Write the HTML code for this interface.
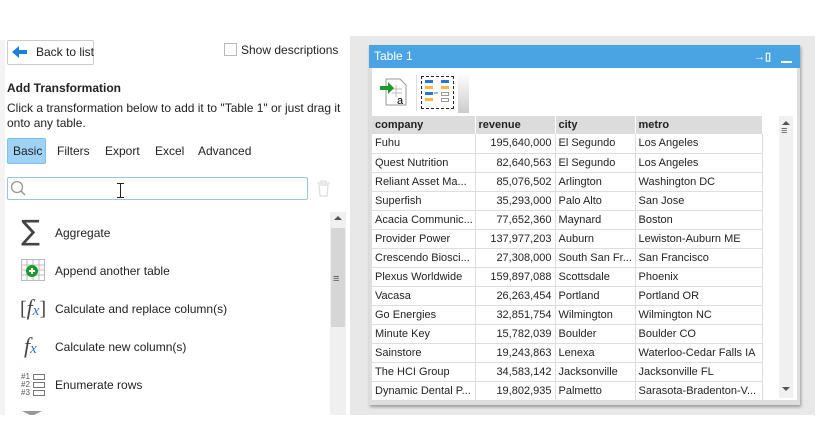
<!DOCTYPE html>
<html><head><meta charset="utf-8"><style>
*{box-sizing:border-box;margin:0;padding:0}
body{width:819px;height:427px;position:relative;background:#fff;font-family:"Liberation Sans",sans-serif;font-size:12px;color:#222;overflow:hidden}
.a{position:absolute;white-space:nowrap}
.btn{left:7px;top:40px;width:87px;height:25px;border:1px solid #ccc;border-radius:2px;background:#fff;font-size:12px;line-height:23px;padding-left:28px}
.tabs span{position:absolute;top:144px;font-size:12px}
td{border-right:1px solid #ddd;border-bottom:1px solid #ddd;height:19px;padding:0 3px;font-size:11px;white-space:nowrap;overflow:hidden}
th{background:#dcdcdc;text-align:left;font-weight:bold;height:18px;padding:0 3px;font-size:11px;border-right:1px solid #fff}
table{border-collapse:collapse;table-layout:fixed}
.n{text-align:right}
.it{position:absolute;left:55px;font-size:12px}
</style></head><body>
<div class="a" style="left:0;top:40px;width:5px;height:375px;background:#f3f3f3"></div>
<div class="a btn"><svg class="a" style="left:4px;top:5px" width="16" height="12"><path d="M0 6 L7 0 V4 H15 V8 H7 V12Z" fill="#1b7fd6"/></svg>Back to list</div>
<div class="a" style="left:224px;top:43px;width:13px;height:13px;border:1px solid #bbb"></div>
<div class="a" style="left:241px;top:43px;font-size:12px">Show descriptions</div>
<div class="a" style="left:7px;top:81px;font-weight:bold;font-size:12px">Add Transformation</div>
<div class="a" style="left:7px;top:101px;font-size:12px;line-height:15px;width:340px;white-space:normal">Click a transformation below to add it to "Table 1" or just drag it onto any table.</div>
<div class="a" style="left:7px;top:138px;width:39px;height:26px;background:#9fd3f5;border:1px solid #7fbfe8;border-radius:2px"></div>
<div class="tabs"><span style="left:13px">Basic</span><span style="left:57px">Filters</span><span style="left:105px">Export</span><span style="left:155px">Excel</span><span style="left:198px">Advanced</span></div>
<div class="a" style="left:7px;top:177px;width:301px;height:23px;border:1px solid #9cc3e0;border-radius:2px"></div>
<svg class="a" style="left:10px;top:180px" width="16" height="17"><circle cx="7" cy="7" r="5.5" stroke="#999" fill="none" stroke-width="1.3"/><path d="M11 11 L15 15" stroke="#999" stroke-width="1.5"/></svg>
<div class="a" style="left:120px;top:183px;width:1px;height:15px;background:#222"></div><div class="a" style="left:117px;top:183px;width:7px;height:1px;background:#222"></div><div class="a" style="left:117px;top:197px;width:7px;height:1px;background:#222"></div>
<svg class="a" style="left:316px;top:180px" width="15" height="17"><path d="M1 3H14M5 3V1H10V3M3 5H12L11 16H4Z" stroke="#ddd" fill="none" stroke-width="1.3"/></svg>
<div class="a" style="left:330px;top:212px;width:16px;height:203px;background:#f0f0f0"></div>
<div class="a" style="left:331px;top:228px;width:14px;height:99px;background:#d6d6d6"></div>
<div class="a" style="left:334px;top:216px;width:0;height:0;border-left:4px solid transparent;border-right:4px solid transparent;border-bottom:4px solid #555"></div>
<div class="a" style="left:333px;top:273px;font-size:11px;color:#555">≡</div>
<div class="a" style="left:21px;top:216px;font-size:28px;line-height:30px;color:#444;font-family:'DejaVu Sans',sans-serif">∑</div>
<div class="it" style="top:226px">Aggregate</div>
<svg class="a" style="left:21px;top:259px" width="24" height="22"><g stroke="#bbb" fill="none"><rect x="0.5" y="0.5" width="23" height="21"/><path d="M0 6H24M0 11H24M0 16H24M6 0V22M12 0V22M18 0V22"/></g><circle cx="11" cy="12" r="6" fill="#1a9a2a"/><path d="M8 12H14M11 9V15" stroke="#fff" stroke-width="2"/></svg>
<div class="it" style="top:264px">Append another table</div>
<div class="a" style="left:20px;top:295px;font-size:20px;color:#444;font-family:'Liberation Serif',serif">[<i style="font-size:22px">f</i><span style="color:#2a73c9;font-size:15px;font-style:italic">x</span>]</div>
<div class="it" style="top:302px">Calculate and replace column(s)</div>
<div class="a" style="left:24px;top:333px;font-size:22px;color:#444;font-family:'Liberation Serif',serif"><i>f</i><span style="color:#2a73c9;font-size:15px;font-style:italic">x</span></div>
<div class="it" style="top:340px">Calculate new column(s)</div>
<div class="a" style="left:21px;top:373px;font-size:8px;line-height:8px;color:#555">#1<br>#2<br>#3</div>
<div class="a" style="left:33px;top:374px;width:12px;height:6px;border:1px solid #777"></div><div class="a" style="left:33px;top:382px;width:12px;height:6px;border:1px solid #777"></div><div class="a" style="left:33px;top:390px;width:12px;height:6px;border:1px solid #777"></div>
<div class="it" style="top:378px">Enumerate rows</div>
<div class="a" style="left:22px;top:411px;width:0;height:0;border-left:10px solid transparent;border-right:10px solid transparent;border-top:5px solid #999"></div>
<div class="a" style="left:0;top:415px;width:819px;height:12px;background:#fff"></div>

<div class="a" style="left:350px;top:36px;width:465px;height:379px;background:#e8e8e8"></div>
<div class="a" style="left:369px;top:45px;width:431px;height:360px;background:#dedede;box-shadow:1px 2px 3px rgba(0,0,0,.35)"></div>
<div class="a" style="left:369px;top:45px;width:431px;height:23px;background:#4aa3e2;color:#fff;font-size:12px;line-height:23px;padding-left:5px">Table 1</div>
<div class="a" style="left:754px;top:50px;color:#fff;font-size:11px;font-weight:bold">→▯</div>
<div class="a" style="left:781px;top:61px;width:11px;height:2px;background:#fff"></div>
<div class="a" style="left:372px;top:68px;width:425px;height:332px;background:#fff"></div>
<svg class="a" style="left:380px;top:77px" width="30" height="30"><path d="M6 2H20L26 8V28H6Z" fill="#fff" stroke="#999"/><path d="M12 12H22M12 16H22M16 8V20" stroke="#bbb"/><path d="M0 9H8V5L14 11L8 17V13H0Z" fill="#1a9a2a"/><text x="17" y="27" font-size="11" font-family="Liberation Sans">a</text></svg>
<div class="a" style="left:416px;top:75px;width:1px;height:36px;background:#ddd"></div>
<div class="a" style="left:421px;top:76px;width:33px;height:33px;border:1px dashed #223"></div>
<svg class="a" style="left:425px;top:80px" width="26" height="26"><g fill="#2a73d9"><rect x="0" y="0" width="8" height="3"/><rect x="0" y="12" width="8" height="3"/><rect x="16" y="0" width="8" height="3"/></g><g fill="#f5b942"><rect x="0" y="6" width="8" height="3"/><rect x="0" y="18" width="8" height="3"/><rect x="16" y="6" width="8" height="3"/></g><g fill="none" stroke="#999"><rect x="16.5" y="12.5" width="7" height="3"/><rect x="16.5" y="18.5" width="7" height="3"/></g><path d="M9 13H13" stroke="#2a73d9"/></svg>
<div class="a" style="left:458px;top:73px;width:11px;height:40px;background:linear-gradient(#fff,#ccc)"></div>
<table class="a" style="left:372px;top:116px;width:390px">
<colgroup><col style="width:103px"><col style="width:80px"><col style="width:80px"><col style="width:127px"></colgroup>
<tr><th>company</th><th>revenue</th><th>city</th><th>metro</th></tr>
<tr><td>Fuhu</td><td class="n">195,640,000</td><td>El Segundo</td><td>Los Angeles</td></tr>
<tr><td>Quest Nutrition</td><td class="n">82,640,563</td><td>El Segundo</td><td>Los Angeles</td></tr>
<tr><td>Reliant Asset Ma...</td><td class="n">85,076,502</td><td>Arlington</td><td>Washington DC</td></tr>
<tr><td>Superfish</td><td class="n">35,293,000</td><td>Palo Alto</td><td>San Jose</td></tr>
<tr><td>Acacia Communic...</td><td class="n">77,652,360</td><td>Maynard</td><td>Boston</td></tr>
<tr><td>Provider Power</td><td class="n">137,977,203</td><td>Auburn</td><td>Lewiston-Auburn ME</td></tr>
<tr><td>Crescendo Biosci...</td><td class="n">27,308,000</td><td>South San Fr...</td><td>San Francisco</td></tr>
<tr><td>Plexus Worldwide</td><td class="n">159,897,088</td><td>Scottsdale</td><td>Phoenix</td></tr>
<tr><td>Vacasa</td><td class="n">26,263,454</td><td>Portland</td><td>Portland OR</td></tr>
<tr><td>Go Energies</td><td class="n">32,851,754</td><td>Wilmington</td><td>Wilmington NC</td></tr>
<tr><td>Minute Key</td><td class="n">15,782,039</td><td>Boulder</td><td>Boulder CO</td></tr>
<tr><td>Sainstore</td><td class="n">19,243,863</td><td>Lenexa</td><td>Waterloo-Cedar Falls IA</td></tr>
<tr><td>The HCI Group</td><td class="n">34,583,142</td><td>Jacksonville</td><td>Jacksonville FL</td></tr>
<tr><td>Dynamic Dental P...</td><td class="n">19,802,935</td><td>Palmetto</td><td>Sarasota-Bradenton-V...</td></tr>
</table>
<div class="a" style="left:779px;top:116px;width:14px;height:282px;background:#f0f0f0"></div>
<div class="a" style="left:782px;top:121px;width:0;height:0;border-left:4px solid transparent;border-right:4px solid transparent;border-bottom:4px solid #555"></div>
<div class="a" style="left:781px;top:125px;font-size:11px;color:#555">≡</div>
<div class="a" style="left:782px;top:387px;width:0;height:0;border-left:4px solid transparent;border-right:4px solid transparent;border-top:4px solid #555"></div>
</body></html>
